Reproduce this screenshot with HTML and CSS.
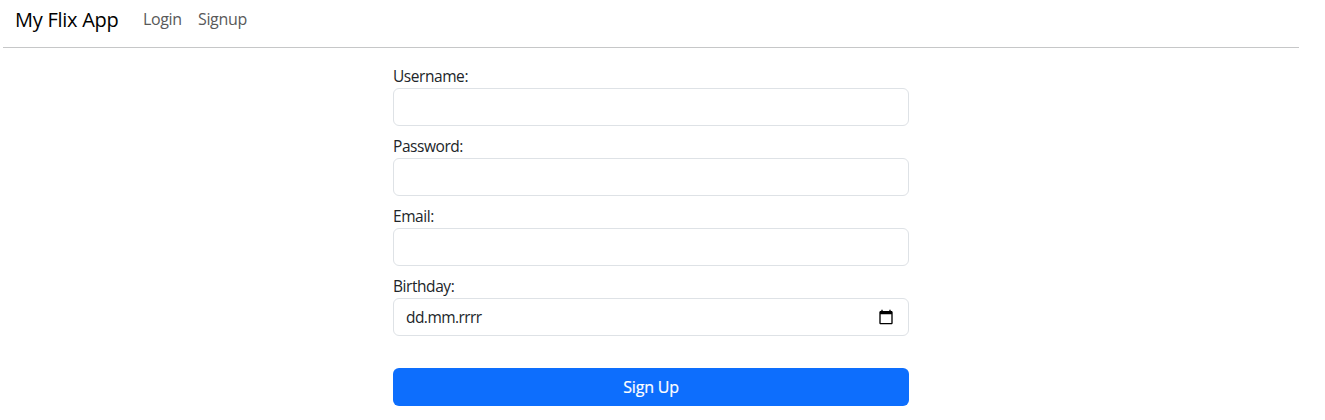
FILE: index.html
```html
<!DOCTYPE html>
<html lang="en">
<head>
<meta charset="utf-8">
<title>My Flix App</title>
<link rel="stylesheet" href="styles.css">
</head>
<body>
<nav class="navbar">
  <a class="brand">My Flix App</a>
  <a class="nav-link">Login</a>
  <a class="nav-link">Signup</a>
</nav>
<form class="form">
  <div class="group"><label class="label" for="u">Username:</label><input class="control" id="u" type="text"></div>
  <div class="group"><label class="label" for="p">Password:</label><input class="control" id="p" type="password"></div>
  <div class="group"><label class="label" for="e">Email:</label><input class="control" id="e" type="email"></div>
  <div class="group"><label class="label">Birthday:</label>
    <div class="control date"><span class="placeholder">dd.mm.rrrr</span>
      <svg class="calendar" viewBox="0 0 24 24"><path d="M20 3h-1V1h-2v2H7V1H5v2H4c-1.100 0-2 .9-2 2v16c0 1.100.9 2 2 2h16c1.100 0 2-.9 2-2V5c0-1.100-.9-2-2-2zm0 18H4V8h16v13z"/></svg>
    </div>
  </div>
  <button class="submit" type="button">Sign Up</button>
</form>
</body>
</html>
```
FILE: styles.css
```css
* { box-sizing: border-box; }
body { margin: 0; height: 420px; overflow: hidden; background: #fff; color: #212529; font: 16px/24px "Segoe UI", "Open Sans", "Noto Sans", sans-serif; }
.navbar { display: flex; align-items: center; width: 1296px; height: 48px; margin-left: 3px; padding: 0 12px 8px; border-bottom: 1px solid #c6c7c8; }
.brand { width: 104px; margin-right: 24px; color: #000; font-size: 20px; line-height: 30px; white-space: nowrap; letter-spacing: -0.27px; }
.nav-link { width: 39px; margin-right: 16px; padding-bottom: 1px; color: #595959; white-space: nowrap; letter-spacing: -0.35px; }
.form { width: 516px; margin: 17px 0 0 393px; }
.group { height: 70px; }
.label { display: block; height: 23px; font-size: 15.5px; line-height: 22px; letter-spacing: -0.44px; }
.control { display: block; width: 100%; height: 38px; border: 1px solid #dee2e6; border-radius: 6px; background: #fff; padding: 6px 12px; font: inherit; outline: none; }
.date { display: flex; align-items: center; justify-content: space-between; padding-right: 14px; }
.placeholder { font-size: 15.5px; letter-spacing: -0.55px; }
.calendar { width: 16px; height: 16px; fill: #000; }
.submit { display: block; width: 100%; height: 38px; margin-top: 23px; border: 0; border-radius: 6px; background: #0d6efd; color: #fff; font: inherit; letter-spacing: -0.2px; -webkit-text-stroke: 0.2px #fff; }
```
